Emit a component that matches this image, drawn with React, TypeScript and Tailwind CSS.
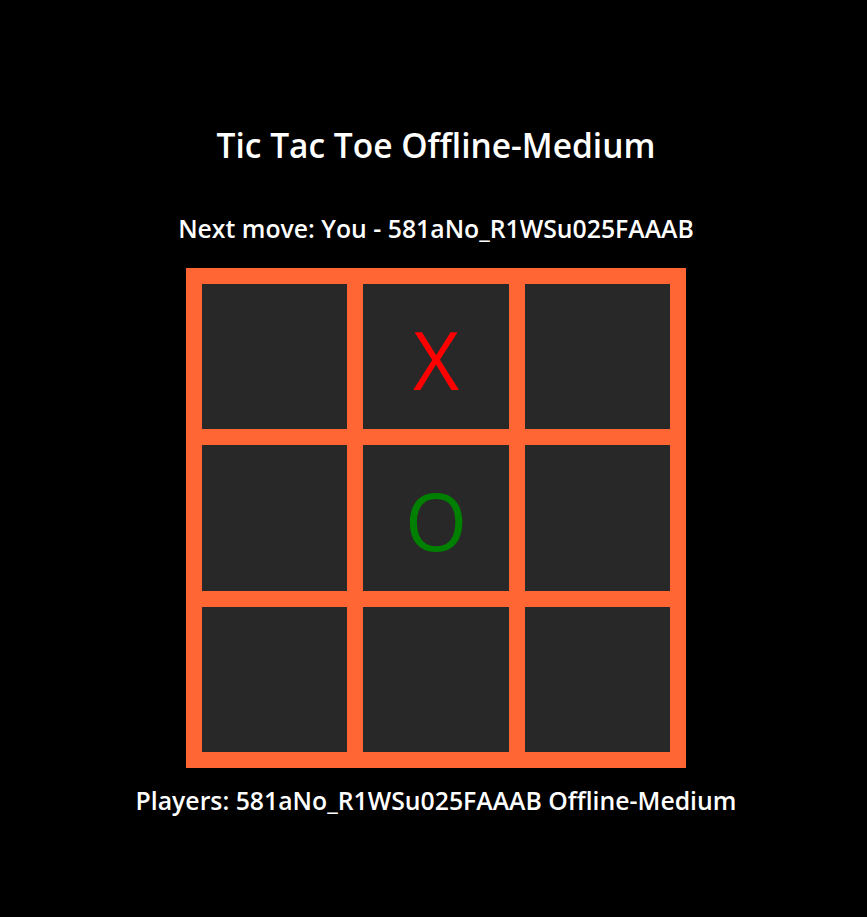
import React from 'react';

const cells = ['', 'X', '', '', 'O', '', '', '', ''];

export default function App() {
  return (
    <div className="min-h-[917px] bg-black text-white flex flex-col items-center pl-[5px] font-['Open_Sans',sans-serif]">
      {/* Title */}
      <h1 className="mt-[124px] text-[33.5px] leading-[42px] font-semibold">Tic Tac Toe Offline-Medium</h1>

      {/* Status */}
      <h2 className="mt-[46px] text-[24.8px] leading-[32px] font-semibold">Next move: You - 581aNo_R1WSu025FAAAB</h2>

      {/* Board */}
      <div className="mt-[24px] w-[500px] h-[500px] bg-[#ff6633] p-4 grid grid-cols-3 grid-rows-3 gap-4">
        {cells.map((c, i) => (
          <div
            key={i}
            className={`bg-[#282828] flex items-center justify-center pt-1 text-[80px] font-normal ${
              c === 'X' ? 'text-[#ff0000]' : 'text-[#008000]'
            }`}
          >
            {c}
          </div>
        ))}
      </div>

      {/* Players */}
      <h2 className="mt-[16px] text-[24.8px] leading-[32px] font-semibold">Players: 581aNo_R1WSu025FAAAB Offline-Medium</h2>
    </div>
  );
}
